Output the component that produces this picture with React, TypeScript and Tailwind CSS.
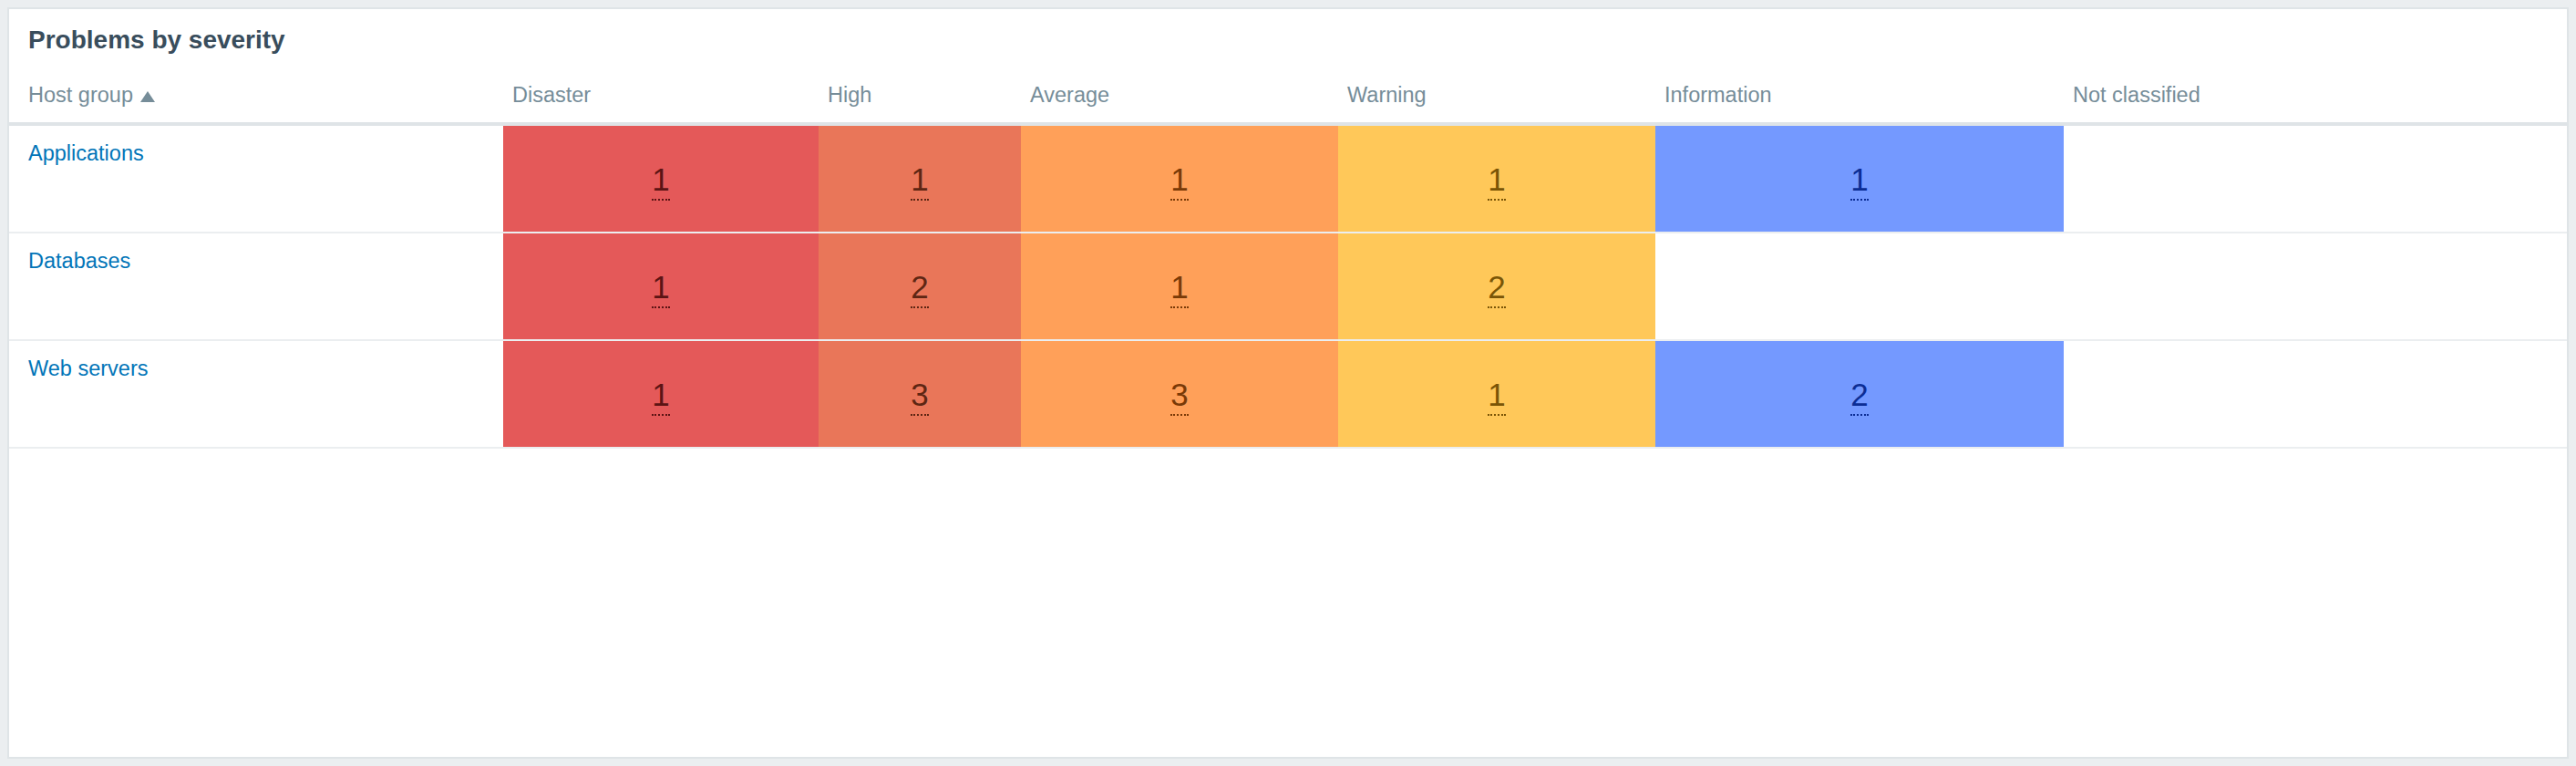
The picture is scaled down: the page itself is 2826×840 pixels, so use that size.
import React from "react";

type Severity = "disaster" | "high" | "average" | "warning" | "info" | "none";

interface HostGroupRow {
  name: string;
  counts: Partial<Record<Severity, number>>;
}

const COLUMNS: { key: Severity; label: string }[] = [
  { key: "disaster", label: "Disaster" },
  { key: "high", label: "High" },
  { key: "average", label: "Average" },
  { key: "warning", label: "Warning" },
  { key: "info", label: "Information" },
  { key: "none", label: "Not classified" },
];

const CELL_STYLE: Record<Severity, string> = {
  disaster: "bg-[#e45959] text-[#5c1414] border-[#5c1414]",
  high: "bg-[#e97659] text-[#5e2613] border-[#5e2613]",
  average: "bg-[#ffa059] text-[#7a3a07] border-[#7a3a07]",
  warning: "bg-[#ffc859] text-[#7a5506] border-[#7a5506]",
  info: "bg-[#7499ff] text-[#0c2d94] border-[#0c2d94]",
  none: "bg-[#97aab3] text-[#2f3f47] border-[#2f3f47]",
};

const ROWS: HostGroupRow[] = [
  { name: "Applications", counts: { disaster: 1, high: 1, average: 1, warning: 1, info: 1 } },
  { name: "Databases", counts: { disaster: 1, high: 2, average: 1, warning: 2 } },
  { name: "Web servers", counts: { disaster: 1, high: 3, average: 3, warning: 1, info: 2 } },
];

const GRID = "grid grid-cols-[542px_346px_222px_348px_348px_448px_1fr]";

function SortArrow() {
  return (
    <svg width="16" height="12" viewBox="0 0 16 12" className="ml-2 inline-block">
      <polygon points="0,12 8,0 16,12" fill="#768d99" />
    </svg>
  );
}

export default function App() {
  return (
    <div className="min-h-screen bg-[#ebeef0] p-2 font-['Liberation_Sans',Arial,sans-serif]">
      <div className="h-[824px] border-2 border-[#dfe4e7] bg-white">
        <h4 className="pl-[21px] pt-[17px] text-[28px] font-bold leading-[34px] text-[#394d5c]">
          Problems by severity
        </h4>

        <div className={`${GRID} border-b-4 border-[#dfe4e7] text-[23.5px] leading-[28px] text-[#768d99]`}>
          <div className="pb-4 pl-[21px] pt-[29px]">
            Host group
            <SortArrow />
          </div>
          {COLUMNS.map((c) => (
            <div key={c.key} className="pb-4 pl-[10px] pt-[29px]">
              {c.label}
            </div>
          ))}
        </div>

        {ROWS.map((row) => (
          <div key={row.name} className={`${GRID} h-[118px] border-b-2 border-[#ebeef0]`}>
            <div className="pl-[21px] pt-4 text-[23.5px] leading-[28px]">
              <a className="text-[#0275b8]">{row.name}</a>
            </div>
            {COLUMNS.map((c) => {
              const count = row.counts[c.key];
              if (count === undefined) return <div key={c.key} />;
              return (
                <div key={c.key} className={`flex items-center justify-center pt-[3px] ${CELL_STYLE[c.key]}`}>
                  <a className="border-b-2 border-dotted border-inherit text-[35px] leading-[42px]">{count}</a>
                </div>
              );
            })}
          </div>
        ))}
      </div>
    </div>
  );
}
